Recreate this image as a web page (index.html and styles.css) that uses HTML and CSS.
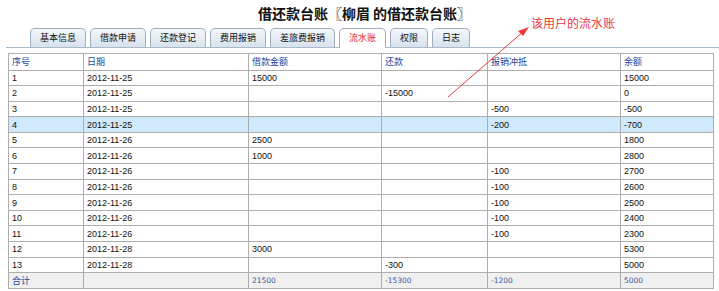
FILE: index.html
```html
<html>
<head>
    <meta charset="utf-8">
    <link rel="stylesheet" href="styles.css">
</head>

<body>
    <div class="page">
        <h1 class="title">借还款台账〖柳眉 的借还款台账〗</h1>

        <ul class="tabs">
            <li class="tab">基本信息</li>
            <li class="tab">借款申请</li>
            <li class="tab">还款登记</li>
            <li class="tab">费用报销</li>
            <li class="tab">差旅费报销</li>
            <li class="tab active">流水账</li>
            <li class="tab">权限</li>
            <li class="tab">日志</li>
        </ul>

        <table class="ledger">
            <colgroup>
                <col style="width:75px">
                <col style="width:165px">
                <col style="width:133px">
                <col style="width:106px">
                <col style="width:133px">
                <col>
            </colgroup>
            <tr class="head">
                <th>序号</th><th>日期</th><th>借款金额</th><th>还款</th><th>报销冲抵</th><th>余额</th>
            </tr>
            <tr><td>1</td><td>2012-11-25</td><td>15000</td><td></td><td></td><td>15000</td></tr>
            <tr><td>2</td><td>2012-11-25</td><td></td><td>-15000</td><td></td><td>0</td></tr>
            <tr><td>3</td><td>2012-11-25</td><td></td><td></td><td>-500</td><td>-500</td></tr>
            <tr class="selected"><td>4</td><td>2012-11-25</td><td></td><td></td><td>-200</td><td>-700</td></tr>
            <tr><td>5</td><td>2012-11-26</td><td>2500</td><td></td><td></td><td>1800</td></tr>
            <tr><td>6</td><td>2012-11-26</td><td>1000</td><td></td><td></td><td>2800</td></tr>
            <tr><td>7</td><td>2012-11-26</td><td></td><td></td><td>-100</td><td>2700</td></tr>
            <tr><td>8</td><td>2012-11-26</td><td></td><td></td><td>-100</td><td>2600</td></tr>
            <tr><td>9</td><td>2012-11-26</td><td></td><td></td><td>-100</td><td>2500</td></tr>
            <tr><td>10</td><td>2012-11-26</td><td></td><td></td><td>-100</td><td>2400</td></tr>
            <tr><td>11</td><td>2012-11-26</td><td></td><td></td><td>-100</td><td>2300</td></tr>
            <tr><td>12</td><td>2012-11-28</td><td>3000</td><td></td><td></td><td>5300</td></tr>
            <tr><td>13</td><td>2012-11-28</td><td></td><td>-300</td><td></td><td>5000</td></tr>
            <tr class="total">
                <td class="label">合计</td><td></td><td>21500</td><td>-15300</td><td>-1200</td><td>5000</td>
            </tr>
        </table>

        <div class="note">该用户的流水账</div>
        <svg class="arrow" width="719" height="291" viewBox="0 0 719 291">
            <line x1="448" y1="97" x2="524" y2="31" stroke="#e8393d" stroke-width="1"/>
            <polygon points="529,27 518,31 523,36" fill="#e8393d"/>
        </svg>
    </div>
</body>
</html>
```

FILE: styles.css
```css
body{
    margin: 0;
    padding: 0;
    background: #fff;
    font-family: "Liberation Sans", "Noto Sans CJK SC", sans-serif;
}
.page{
    position: relative;
    width: 719px;
    height: 291px;
    overflow: hidden;
}
.title{
    margin: 0;
    padding-top: 4px;
    height: 21px;
    text-align: center;
    font-family: "Noto Sans CJK SC", sans-serif;
    font-size: 14px;
    line-height: 18px;
    font-weight: bold;
    color: #111;
    padding-left: 10px;
}
.tabs{
    list-style: none;
    margin: 3px 0 0 6px;
    padding: 0 0 0 24px;
    display: flex;
    gap: 4px;
    height: 19px;
    border-bottom: 1px solid #a9bacb;
}
.tab{
    height: 18px;
    padding: 0 9px;
    border: 1px solid #9fadbd;
    border-bottom: none;
    border-radius: 5px 5px 0 0;
    background: linear-gradient(#f4f7fa, #d8e2ec);
    font-family: "Noto Sans CJK SC", sans-serif;
    font-size: 9px;
    line-height: 18px;
    color: #111;
}
.tab.active{
    background: #fff;
    color: #e5222a;
    height: 19px;
    margin-bottom: -1px;
}
.ledger{
    margin: 5px 0 0 8px;
    width: 706px;
    border-collapse: collapse;
    border: 1px solid #8f8f8f;
    table-layout: fixed;
    font-size: 9px;
}
.ledger th,
.ledger td{
    border: 1px solid #adadad;
    height: 15.6px;
    padding: 0 3px;
    text-align: left;
    font-weight: normal;
    color: #111;
    white-space: nowrap;
}
.ledger .head th{
    height: 16.5px;
    color: #23479b;
    font-family: "Noto Sans CJK SC", sans-serif;
}
.ledger .selected td{
    background: #cfe8fa;
}
.ledger .total td{
    background: #f0f0f0;
    color: #3d58a0;
    font-family: "DejaVu Sans", sans-serif;
    font-size: 7.5px;
}
.ledger .total td.label{
    font-family: "Noto Sans CJK SC", sans-serif;
    font-size: 9px;
    color: #23479b;
}
.note{
    position: absolute;
    left: 531px;
    top: 16px;
    font-family: "Noto Sans CJK SC", sans-serif;
    font-size: 12px;
    line-height: 14px;
    color: #e8393d;
}
.arrow{
    position: absolute;
    left: 0;
    top: 0;
}
```
